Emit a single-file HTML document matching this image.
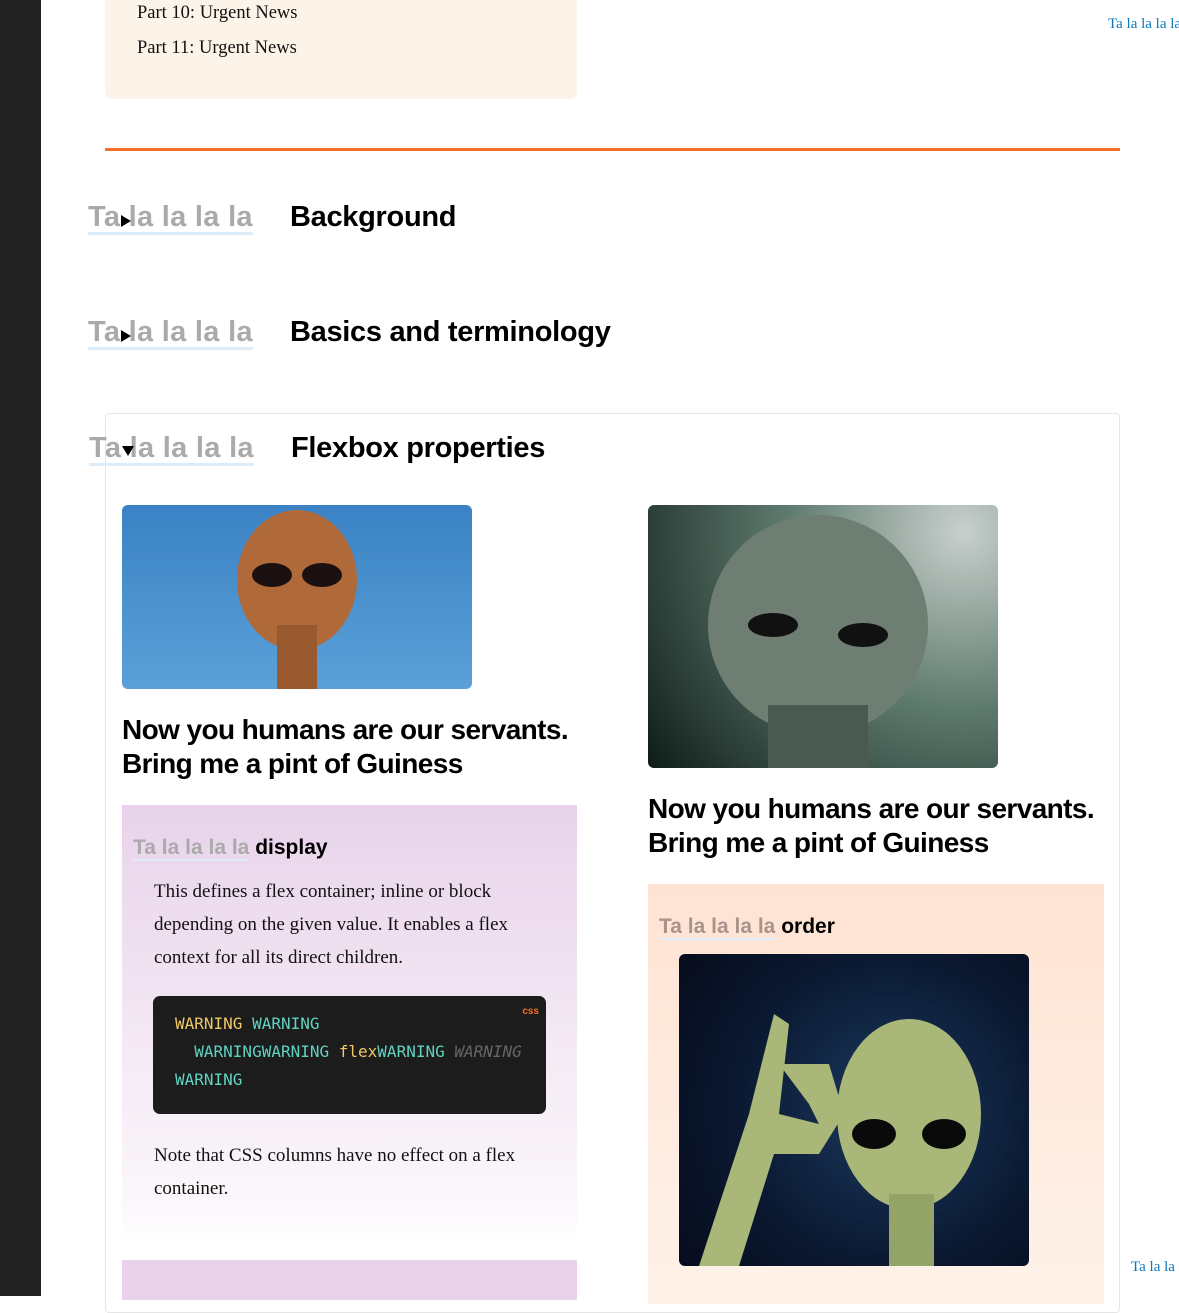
<!DOCTYPE html>
<html><head><meta charset="utf-8"><style>
*{margin:0;padding:0;box-sizing:border-box}
body{width:1179px;height:1296px;overflow:hidden;background:#fff;position:relative;font-family:"Liberation Serif",serif}
.abs{position:absolute}
.sans{font-family:"Liberation Sans",sans-serif}
.ta{color:#aaa;font-weight:bold;font-size:29px;border-bottom:3px solid #dcecf8;line-height:30px;letter-spacing:0.3px}
.h2{font-weight:bold;font-size:29px;color:#000;letter-spacing:-0.3px}
.tri{width:0;height:0;border-top:6px solid transparent;border-bottom:6px solid transparent;border-left:10px solid #000}
.trid{width:0;height:0;border-left:6px solid transparent;border-right:6px solid transparent;border-top:10px solid #000}
.h3{font-weight:bold;font-size:28px;line-height:34px;color:#000;letter-spacing:-0.6px}
.p{font-size:19px;line-height:33px;color:#111}
.code{font-family:"DejaVu Sans Mono",monospace;font-size:16px;line-height:28px}
</style></head><body>
<div class="abs" style="left:0;top:0;width:41px;height:1296px;background:#222"></div>
<div class="abs" style="left:105px;top:-10px;width:472px;height:109px;background:#fdf4e9;border-radius:0 0 6px 6px"></div>
<div class="abs p" style="left:137px;top:-3px;font-size:18.5px">Part 10: Urgent News</div>
<div class="abs p" style="left:137px;top:32px;font-size:18.5px">Part 11: Urgent News</div>
<div class="abs" style="left:1108px;top:16px;color:#0a78b8;font-size:15px;white-space:nowrap">Ta la la la la</div>
<div class="abs" style="left:105px;top:148px;width:1015px;height:3px;background:#f36f2b"></div>

<div class="abs sans ta" style="left:88px;top:202px">Ta la la la la</div>
<div class="abs tri" style="left:121px;top:215px"></div>
<div class="abs sans h2" style="left:290px;top:201px">Background</div>

<div class="abs sans ta" style="left:88px;top:317px">Ta la la la la</div>
<div class="abs tri" style="left:121px;top:330px"></div>
<div class="abs sans h2" style="left:290px;top:316px">Basics and terminology</div>

<div class="abs" style="left:105px;top:413px;width:1015px;height:900px;border:1px solid #e6e6e6;border-radius:4px"></div>
<div class="abs sans ta" style="left:89px;top:433px">Ta la la la la</div>
<div class="abs trid" style="left:122px;top:446px"></div>
<div class="abs sans h2" style="left:291px;top:432px">Flexbox properties</div>

<div class="abs" style="left:122px;top:505px;width:350px;height:184px;border-radius:6px;overflow:hidden;background:linear-gradient(#3a82c4,#5ba0d8)">
<svg width="350" height="184"><ellipse cx="175" cy="75" rx="60" ry="70" fill="#b06a3a"/><rect x="155" y="120" width="40" height="70" fill="#9a5a30"/><ellipse cx="150" cy="70" rx="20" ry="12" fill="#1a1010"/><ellipse cx="200" cy="70" rx="20" ry="12" fill="#1a1010"/></svg></div>
<div class="abs sans h3" style="left:122px;top:713px">Now you humans are our servants.<br>Bring me a pint of Guiness</div>
<div class="abs" style="left:122px;top:805px;width:455px;height:440px;background:linear-gradient(#e8d3ea,#fbf7fb 90%,#fff)"></div>
<div class="abs sans" style="left:133px;top:836px;font-size:21px;font-weight:bold;letter-spacing:0"><span style="color:#aaa;border-bottom:2px solid #dcecf8">Ta la la la la</span> <span style="color:#000">display</span></div>
<div class="abs p" style="left:154px;top:875px;width:400px">This defines a flex container; inline or block depending on the given value. It enables a flex context for all its direct children.</div>
<div class="abs code" style="left:153px;top:996px;width:393px;height:118px;background:#1c1c1c;border-radius:7px;padding:14px 0 0 22px">
<span style="position:absolute;right:7px;top:2px;font-family:'Liberation Sans',sans-serif;font-size:10px;font-weight:bold;color:#f36f2b">css</span>
<span style="color:#f0c866">WARNING</span> <span style="color:#5fd3c0">WARNING</span><br>
&nbsp;&nbsp;<span style="color:#5fd3c0">WARNINGWARNING</span> <span style="color:#f0c866">flex</span><span style="color:#5fd3c0">WARNING</span> <span style="color:#666;font-style:italic">WARNING</span><br>
<span style="color:#5fd3c0">WARNING</span></div>
<div class="abs p" style="left:154px;top:1139px;width:400px">Note that CSS columns have no effect on a flex container.</div>
<div class="abs" style="left:122px;top:1260px;width:455px;height:40px;background:#e8d3ea"></div>

<div class="abs" style="left:648px;top:505px;width:350px;height:263px;border-radius:6px;overflow:hidden;background:radial-gradient(circle at 90% 10%,#c8d0cc,#5e7a6e 45%,#0e1c18)">
<svg width="350" height="263"><ellipse cx="170" cy="120" rx="110" ry="110" fill="#6e7e72"/><ellipse cx="125" cy="120" rx="25" ry="12" fill="#111"/><ellipse cx="215" cy="130" rx="25" ry="12" fill="#111"/><rect x="120" y="200" width="100" height="70" fill="#4a5a50"/></svg></div>
<div class="abs sans h3" style="left:648px;top:792px">Now you humans are our servants.<br>Bring me a pint of Guiness</div>
<div class="abs" style="left:648px;top:884px;width:456px;height:420px;background:linear-gradient(#fee3d3,#fef2e9)"></div>
<div class="abs sans" style="left:659px;top:915px;font-size:21px;font-weight:bold;letter-spacing:0"><span style="color:#a9948c;border-bottom:2px solid #dcecf8">Ta la la la la</span> <span style="color:#000">order</span></div>
<div class="abs" style="left:679px;top:954px;width:350px;height:312px;border-radius:6px;overflow:hidden;background:radial-gradient(circle at 60% 50%,#1b3a60,#0a1830 60%,#070c1c)">
<svg width="350" height="312"><path d="M20 312 L70 160 L95 60 L110 70 L100 160 L140 170 L130 150 L100 110 L150 110 L165 160 L140 200 L95 200 L60 312Z" fill="#a9b878"/><ellipse cx="230" cy="160" rx="72" ry="95" fill="#a9b878"/><rect x="210" y="240" width="45" height="72" fill="#94a468"/><ellipse cx="195" cy="180" rx="22" ry="15" fill="#0a0a0a"/><ellipse cx="265" cy="180" rx="22" ry="15" fill="#0a0a0a"/></svg></div>
<div class="abs" style="left:1131px;top:1259px;color:#0a78b8;font-size:15px;white-space:nowrap">Ta la la</div>
</body></html>
